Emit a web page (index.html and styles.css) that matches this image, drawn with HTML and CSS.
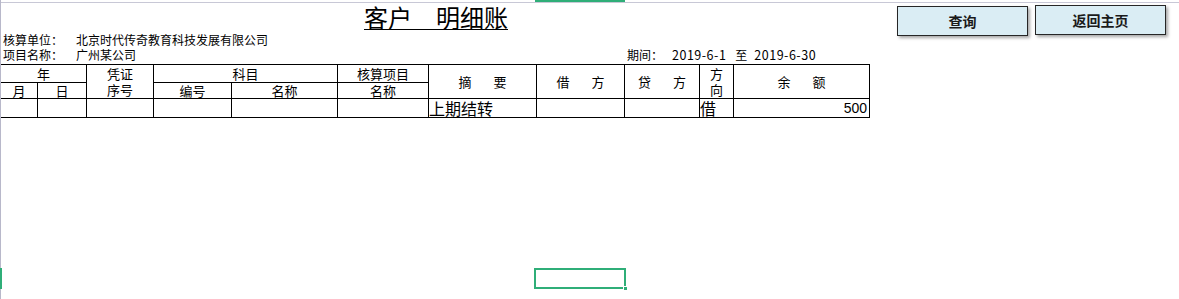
FILE: index.html
```html
<!DOCTYPE html>
<html lang="zh-CN">
<head>
<meta charset="utf-8">
<title>客户明细账</title>
<link rel="stylesheet" href="styles.css">
</head>
<body>
<div class="sheet">
  <div class="topbar"><div class="colsel"></div></div>
  <div class="topline"></div>

  <div class="title-row"><span class="title">客户　明细账</span></div>

  <div class="info info1"><span class="label">核算单位：</span><span>北京时代传奇教育科技发展有限公司</span></div>
  <div class="info info2">
    <div class="info-left"><span class="label">项目名称：</span><span>广州某公司</span></div>
    <div class="period"><span>期间：</span><span class="date d1">2019-6-1</span><span class="to">至</span><span class="date d2">2019-6-30</span></div>
  </div>

  <div class="ledger">
    <div class="c h-year">年</div>
    <div class="c h-voucher two"><span>凭证</span><span>序号</span></div>
    <div class="c h-subject">科目</div>
    <div class="c h-item">核算项目</div>
    <div class="c h-summary spread"><span>摘</span><span>要</span></div>
    <div class="c h-debit spread"><span>借</span><span>方</span></div>
    <div class="c h-credit spread"><span>贷</span><span>方</span></div>
    <div class="c h-dir two"><span>方</span><span>向</span></div>
    <div class="c h-balance spread"><span>余</span><span>额</span></div>

    <div class="c">月</div>
    <div class="c">日</div>
    <div class="c">编号</div>
    <div class="c">名称</div>
    <div class="c">名称</div>

    <div class="c d"></div>
    <div class="c d"></div>
    <div class="c d"></div>
    <div class="c d"></div>
    <div class="c d"></div>
    <div class="c d"></div>
    <div class="c d big">上期结转</div>
    <div class="c d"></div>
    <div class="c d"></div>
    <div class="c d big">借</div>
    <div class="c d num">500</div>
  </div>

  <div class="edge"></div>
  <div class="edge-sel"></div>
  <div class="cell-sel"><span class="handle"></span></div>

  <button class="btn btn-query">查询</button>
  <button class="btn btn-home">返回主页</button>
</div>
</body>
</html>
```

FILE: styles.css
```css
* { box-sizing: border-box; }

html, body {
  margin: 0;
  padding: 0;
  background: #ffffff;
}

body {
  font-family: "Noto Sans CJK SC", "Noto Sans", sans-serif;
  color: #000;
}

.sheet {
  position: relative;
  width: 1179px;
  height: 299px;
  overflow: hidden;
  background: #fff;
}

.topbar {
  height: 2px;
}

.colsel {
  margin-left: 535px;
  width: 90px;
  height: 2px;
  background: #2fae78;
}

.topline {
  height: 1px;
  background: #c8c8d6;
}

.title-row {
  height: 30px;
  width: 872px;
  display: flex;
  justify-content: center;
  align-items: flex-start;
}

.title {
  display: block;
  margin-top: 4px;
  font-size: 24px;
  line-height: 20px;
  padding-bottom: 2px;
  border-bottom: 1px solid #000;
  white-space: pre;
}

.info {
  font-size: 12px;
  line-height: 14px;
  padding-left: 3px;
  white-space: pre;
}

.info1 { height: 15px; }
.info2 {
  height: 16px;
  display: flex;
}

.info-left { width: 624px; }

.label {
  display: inline-block;
  width: 73px;
}

.date {
  display: inline-block;
  font-size: 12.5px;
  letter-spacing: 0.5px;
}

.d1 { margin-left: 9px; }
.to { display: inline-block; margin-left: 9px; }
.d2 { margin-left: 7px; }

.ledger {
  width: 870px;
  display: grid;
  grid-template-columns: 36px 48px 66px 77px 105px 90px 107px 87px 74px 33px 135px;
  grid-template-rows: 17px 15px 18px;
  gap: 1px;
  padding: 1px;
  background: #000;
}

.c {
  background: #fff;
  display: flex;
  align-items: center;
  justify-content: center;
  font-size: 13px;
  line-height: 16px;
  white-space: nowrap;
}

.two {
  flex-direction: column;
}

.spread span + span {
  margin-left: 22px;
}

.h-year { grid-column: 1 / 3; grid-row: 1; }
.h-voucher { grid-column: 3; grid-row: 1 / 3; }
.h-subject { grid-column: 4 / 6; grid-row: 1; }
.h-item { grid-column: 6; grid-row: 1; }
.h-summary { grid-column: 7; grid-row: 1 / 3; }
.h-debit { grid-column: 8; grid-row: 1 / 3; }
.h-credit { grid-column: 9; grid-row: 1 / 3; }
.h-dir { grid-column: 10; grid-row: 1 / 3; }
.h-balance { grid-column: 11; grid-row: 1 / 3; }

.d {
  line-height: 18px;
}

.big {
  font-size: 16px;
  justify-content: flex-start;
  padding-left: 0;
}

.num {
  justify-content: flex-end;
  padding-right: 2px;
  font-family: "Liberation Sans", Arial, sans-serif;
  font-size: 14px;
}

.edge {
  position: absolute;
  left: 0;
  top: 0;
  width: 1px;
  height: 299px;
  background: #b8b8ca;
}

.edge-sel {
  position: absolute;
  left: 0;
  top: 268px;
  width: 2px;
  height: 21px;
  background: #2fae78;
}

.cell-sel {
  position: absolute;
  left: 534px;
  top: 268px;
  width: 92px;
  height: 21px;
  border: 2px solid #2fae78;
}

.handle {
  position: absolute;
  right: -4px;
  bottom: -4px;
  width: 5px;
  height: 5px;
  background: #2fae78;
  border: 1px solid #fff;
}

.btn {
  position: absolute;
  width: 131px;
  height: 30px;
  background: #daedf4;
  border: 1px solid #262626;
  box-shadow: 2px 2px 3px rgba(0, 0, 0, 0.35);
  font-family: "Noto Sans CJK SC", "Noto Sans", sans-serif;
  font-weight: bold;
  font-size: 14px;
  line-height: 16px;
  color: #1a1a1a;
  padding: 0;
  margin: 0;
}

.btn-query { left: 897px; top: 6px; }
.btn-home { left: 1035px; top: 5px; }
```
